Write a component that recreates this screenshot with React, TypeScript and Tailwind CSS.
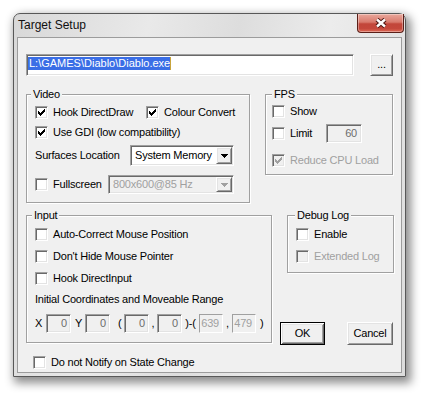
import type { ReactNode } from "react";

const sunken =
  "border border-t-[#a0a0a0] border-l-[#a0a0a0] border-r-white border-b-white shadow-[inset_1px_1px_0_#696969,inset_-1px_-1px_0_#e3e3e3]";
const raised =
  "border border-t-white border-l-white border-r-[#696969] border-b-[#696969] shadow-[inset_1px_1px_0_#e3e3e3,inset_-1px_-1px_0_#a0a0a0]";

function Check({ checked = false, disabled = false }: { checked?: boolean; disabled?: boolean }) {
  const c = disabled ? "#a0a0a0" : "#000";
  return (
    <span
      className={`flex h-[13px] w-[13px] shrink-0 items-center justify-center ${sunken} ${
        disabled ? "bg-[#f0f0f0]" : "bg-white"
      }`}
    >
      {checked && (
        <svg width="7" height="7" viewBox="0 0 7 7" shapeRendering="crispEdges">
          <path
            d="M6 0h1v1h-1zM5 1h2v1h-2zM0 2h1v1h-1zM4 2h3v1h-3zM0 3h2v1h-2zM3 3h3v1h-3zM0 4h5v1h-5zM1 5h3v1h-3zM2 6h1v1h-1z"
            fill={c}
          />
        </svg>
      )}
    </span>
  );
}

function CheckRow({
  label,
  checked,
  disabled,
  className = "",
}: {
  label: string;
  checked?: boolean;
  disabled?: boolean;
  className?: string;
}) {
  return (
    <div className={`flex h-[16px] shrink-0 items-center gap-[5px] ${className}`}>
      <Check checked={checked} disabled={disabled} />
      <span className={disabled ? "text-[#a0a0a0]" : "text-black"}>{label}</span>
    </div>
  );
}

function Group({
  label,
  labelPos,
  className,
  children,
}: {
  label: string;
  labelPos: string;
  className: string;
  children: ReactNode;
}) {
  return (
    <div
      className={`relative shrink-0 border border-[#a0a0a0] shadow-[inset_1px_1px_0_#fff,1px_1px_0_#fff] ${className}`}
    >
      <span className={`absolute top-[-7px] bg-[#f0f0f0] px-[2px] leading-[13px] ${labelPos}`}>
        {label}
      </span>
      {children}
    </div>
  );
}

function Edit({ value, className, light = false }: { value: string; className: string; light?: boolean }) {
  return (
    <div
      className={`flex shrink-0 items-center justify-end bg-[#f0f0f0] pr-[3px] ${
        light
          ? "border border-t-[#a0a0a0] border-l-[#a0a0a0] border-r-white border-b-white text-[#a0a0a0]"
          : `${sunken} text-[#6d6d6d]`
      } ${className}`}
    >
      {value}
    </div>
  );
}

function Arrow({ disabled = false }: { disabled?: boolean }) {
  return (
    <svg width="7" height="4" viewBox="0 0 7 4" shapeRendering="crispEdges">
      <path d="M0 0h7v1h-7zM1 1h5v1h-5zM2 2h3v1h-3zM3 3h1v1h-1z" fill={disabled ? "#a0a0a0" : "#000"} />
    </svg>
  );
}

function Combo({ value, className, disabled = false }: { value: string; className: string; disabled?: boolean }) {
  return (
    <div
      className={`ml-auto flex shrink-0 items-stretch p-[1px] ${sunken} ${
        disabled ? "bg-[#f0f0f0] text-[#a0a0a0]" : "bg-white text-black"
      } ${className}`}
    >
      <span className="flex flex-1 items-center pl-[3px]">{value}</span>
      <span className={`flex w-[16px] items-center justify-center bg-[#f0f0f0] ${raised}`}>
        <Arrow disabled={disabled} />
      </span>
    </div>
  );
}

export default function App() {
  return (
    <div className="h-[396px] w-[424px] whitespace-nowrap bg-white pl-[13px] pt-[13px] font-['Liberation_Sans',Arial,sans-serif] text-[11px] leading-[13px] tracking-[-0.2px] text-black">
      <div className="flex h-[364px] w-[393px] flex-col rounded-t-[7px] border border-[#585858] bg-[linear-gradient(100deg,#d8d8d8_0%,#e9e9e9_30%,#dddddd_50%,#ececec_70%,#dcdcdc_100%)] shadow-[3px_4px_10px_2px_rgba(0,0,0,0.45)]">
        {/* Title bar */}
        <div className="flex h-[23px] shrink-0 items-center justify-between pl-[4px] pr-[1px]">
          <span className="text-[12px] tracking-normal text-[#101010]">Target Setup</span>
          <div className="flex h-[19px] w-[47px] items-center justify-center self-start rounded-b-[4px] border border-t-0 border-[#5a1f18] bg-[linear-gradient(180deg,#e9a89c_0%,#d97a6d_45%,#c2463a_55%,#c4473b_80%,#df6a56_100%)] shadow-[inset_0_0_0_1px_rgba(255,255,255,0.35)]">
            <svg width="14" height="10" viewBox="0 0 14 10">
              <path d="M3 1.5L11 8.5M11 1.5L3 8.5" stroke="#4a1410" strokeWidth="4.4" />
              <path d="M3 1.5L11 8.5M11 1.5L3 8.5" stroke="#fff" strokeWidth="2.4" />
            </svg>
          </div>
        </div>

        {/* Client area */}
        <div className="mx-[3px] mb-[3px] flex-1 border border-[#9c9c9c] bg-[#f0f0f0] pl-[8px] pt-[16px]">
          {/* Path */}
          <div className="flex">
            <div className={`flex h-[22px] w-[328px] items-start bg-white p-[1px] pt-[2px] ${sunken}`}>
              <span className="bg-[#3a6ee6] pl-[1px] tracking-normal text-white">L:\GAMES\Diablo\Diablo.exe</span>
              <span className="h-[13px] w-[1px] bg-[#c8a43c]" />
            </div>
            <div className={`ml-[16px] flex h-[22px] w-[23px] items-center justify-center bg-[#f0f0f0] pb-[2px] ${raised}`}>
              ...
            </div>
          </div>

          {/* Video + FPS */}
          <div className="mt-[18px] flex items-start">
            <Group label="Video" labelPos="left-[4px]" className="h-[109px] w-[224px] pl-[8px] pr-[15px] pt-[9px]">
              <div className="flex h-[16px] items-center">
                <CheckRow label="Hook DirectDraw" checked className="w-[111px]" />
                <CheckRow label="Colour Convert" checked />
              </div>
              <CheckRow label="Use GDI (low compatibility)" checked className="mt-[4px]" />
              <div className="mt-[5px] flex h-[21px] items-center">
                <span>Surfaces Location</span>
                <Combo value="System Memory" className="h-[21px] w-[104px]" />
              </div>
              <div className="mt-[9px] flex h-[19px] items-center">
                <CheckRow label="Fullscreen" />
                <Combo value="800x600@85 Hz" disabled className="h-[19px] w-[126px]" />
              </div>
            </Group>

            <Group label="FPS" labelPos="left-[6px]" className="ml-[15px] h-[81px] w-[128px] pl-[6px] pt-[8px]">
              <CheckRow label="Show" />
              <div className="mt-[5px] flex h-[19px] items-center gap-[5px]">
                <Check />
                <span className="w-[31px]">Limit</span>
                <Edit value="60" className="h-[19px] w-[36px] pr-[4px]" />
              </div>
              <CheckRow label="Reduce CPU Load" checked disabled className="mt-[9px]" />
            </Group>
          </div>

          {/* Input + Debug / buttons */}
          <div className="mt-[12px] flex items-start">
            <Group label="Input" labelPos="left-[5px]" className="h-[128px] w-[246px] pl-[8px] pt-[10px]">
              <CheckRow label="Auto-Correct Mouse Position" />
              <CheckRow label="Don't Hide Mouse Pointer" className="mt-[6px]" />
              <CheckRow label="Hook DirectInput" className="mt-[6px]" />
              <div className="mt-[5px] flex h-[16px] items-center">Initial Coordinates and Moveable Range</div>
              <div className="mt-[7px] flex h-[19px] items-center">
                <span className="w-[11px]">X</span>
                <Edit value="0" className="h-[19px] w-[25px]" />
                <span className="ml-[4px] w-[10px]">Y</span>
                <Edit value="0" className="h-[19px] w-[25px]" />
                <span className="ml-[8px] w-[6px]">(</span>
                <Edit value="0" className="h-[19px] w-[25px]" />
                <span className="w-[8px] text-center">,</span>
                <Edit value="0" className="h-[19px] w-[25px]" />
                <span className="w-[17px] text-center">)-(</span>
                <Edit value="639" light className="h-[19px] w-[24px] pr-[2px]" />
                <span className="w-[9px] text-center">,</span>
                <Edit value="479" light className="h-[19px] w-[24px] pr-[2px]" />
                <span className="ml-[4px]">)</span>
              </div>
            </Group>

            <div className="ml-[8px] flex flex-col">
              <Group label="Debug Log" labelPos="left-[7px]" className="ml-[7px] h-[58px] w-[107px] pl-[8px] pt-[10px]">
                <CheckRow label="Enable" />
                <CheckRow label="Extended Log" disabled className="mt-[6px]" />
              </Group>
              <div className="mt-[49px] flex">
                <div className="flex h-[23px] w-[45px] items-center justify-center border border-black bg-[#f0f0f0] shadow-[inset_1px_1px_0_#fff,inset_-1px_-1px_0_#696969,inset_2px_2px_0_#e3e3e3,inset_-2px_-2px_0_#a0a0a0]">
                  OK
                </div>
                <div className={`ml-[22px] flex h-[23px] w-[46px] items-center justify-center bg-[#f0f0f0] ${raised}`}>
                  Cancel
                </div>
              </div>
            </div>
          </div>

          <CheckRow label="Do not Notify on State Change" className="ml-[7px] mt-[9px]" />
        </div>
      </div>
    </div>
  );
}
